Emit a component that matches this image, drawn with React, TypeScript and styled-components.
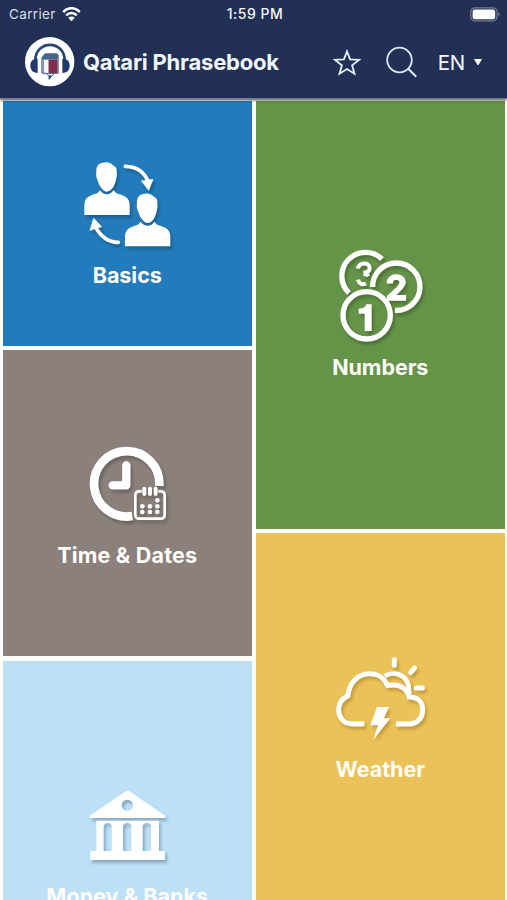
import React from "react";
import styled, { createGlobalStyle } from "styled-components";

const Global = createGlobalStyle`
  * { box-sizing: border-box; }
  body { margin: 0; background: #fff; font-family: Inter, "Liberation Sans", sans-serif; }
`;
const Screen = styled.div`
  width: 507px; height: 900px; overflow: hidden;
  display: flex; flex-direction: column; background: #fdfefb;
`;
const Header = styled.header`
  flex: none; height: 99px; background: #223056; color: #f2f7ff;
  border-bottom: 1px solid #77798a;
  box-shadow: 0 1px 3px rgba(0, 0, 0, 0.75); z-index: 1;
`;
const StatusBar = styled.div`
  height: 27px; padding: 0 6px 0 9px;
  display: grid; grid-template-columns: 1fr auto 1fr; align-items: center;
  font-size: 13.5px; line-height: 28px;
`;
const Carrier = styled.div`
  display: flex; align-items: center; gap: 6px; color: #d9dfeb; letter-spacing: 0.35px;
`;
const Clock = styled.div`font-weight: 500; font-size: 14px; letter-spacing: 0.5px;`;
const Battery = styled.div`display: flex; justify-content: flex-end;`;
const NavBar = styled.div`
  height: 70px; padding: 0 25px 0 25px; display: flex; align-items: center;
`;
const Title = styled.h1`
  margin: 0 auto 0 8px; font-size: 22px; font-weight: 700; letter-spacing: -0.22px; white-space: nowrap;
`;
const StarIcon = styled.svg`margin-right: 25px;`;
const SearchIcon = styled.svg`margin-right: 21px;`;
const Language = styled.div`
  display: flex; align-items: center; gap: 9px; font-size: 20.5px; letter-spacing: -0.2px;
`;
const Columns = styled.main`
  display: grid; grid-template-columns: 248.5px 248.5px; column-gap: 4.5px;
  padding: 2px 0 0 3px;
`;
const Column = styled.div`display: flex; flex-direction: column; gap: 4.5px;`;
const Tile = styled.section<{ $color: string; $height: number }>`
  flex: none; height: ${p => p.$height}px; background: ${p => p.$color};
  display: flex; flex-direction: column; align-items: center; justify-content: center;
`;
const TileIcon = styled.svg<{ $shadow?: string }>`
  width: 120px; height: 104px; overflow: visible; fill: #fff;
  filter: drop-shadow(2px 3px 1.5px ${p => p.$shadow || "rgba(0, 0, 0, 0.22)"});
`;
const TileLabel = styled.h2<{ $spacing?: number }>`
  margin: 0; height: 32px; line-height: 32px; font-size: 21.5px; font-weight: 700;
  color: #fffdfa; white-space: nowrap; letter-spacing: ${p => p.$spacing ?? -0.05}px;
`;
const Numeral = styled.text`
  font-family: Inter, sans-serif; font-weight: 700; text-anchor: middle;
`;

const Logo = () => (
  <svg width="50" height="50" viewBox="0 0 150 150">
    <circle cx="74" cy="74" r="74" fill="#fff" />
    <path d="M31 70C31 8 119 8 119 70" fill="none" stroke="#24457a" strokeWidth="8" />
    <path d="M38 65C22 64 15 75 16 88S25 108 38 108ZM112 65c16-1 23 10 22 23s-9 20-22 20Z" fill="#203c6c" />
    <path d="M49 62 60 49H95L101 55V109H49Z" fill="#45658d" />
    <path d="M51 66H101V111H66L51 106Z" fill="#8794ad" />
    <path d="M57 69H71V110L57 106Z" fill="#f5f5fa" />
    <path d="M71 68H97V109H71Z" fill="#842c50" />
    <path d="M53 110H88L72 127V116L65 112" fill="#fff" stroke="#4d6d97" strokeWidth="3" />
    <path d="M72 115v13l9-12Z" fill="#24457a" />
  </svg>
);

const Person = ({ x, y }: { x: number; y: number }) => (
  <g transform={`translate(${x} ${y})`}>
    <path d="M36 26C36 7 47 1 58 1c8-3 20-1 27 7 9 4 13 10 12 19 1 8 1 13-1 21C92 72 80 88 68 88S44 71 39 52c-4-8-4-14-3-26Z" />
    <path d="M0 158V126C2 103 18 100 39 93L47 84C52 92 60 96 68 96S83 91 88 84L96 93C117 100 134 103 136 126V158Z" />
  </g>
);

const Basics = () => (
  <TileIcon viewBox="-9 15 360 312">
    <Person x={43} y={37} />
    <Person x={165} y={131} />
    <path d="M166 49C201 50 223 64 235 96M145 277C110 276 90 257 76 229" fill="none" stroke="#fff" strokeWidth="11" strokeLinecap="round" />
    <path d="m236 121-22-28 35-5ZM71 205l24 25-35 11Z" stroke="#fff" strokeWidth="2" strokeLinejoin="round" />
  </TileIcon>
);

const Numbers = () => (
  <TileIcon viewBox="1 21 360 312">
    <g fill="none" stroke="#fff" strokeWidth="16">
      <path d="M88 159A71 71 0 0 1 187 57" />
      <path d="M159 141A71 71 0 1 1 226 211" />
      <circle cx="141" cy="226" r="71" />
    </g>
    <path d="M115 86C117 66 150 66 150 84C150 94 142 98 131 98M131 102C139 102 143 104 146 109M115 119C117 130 127 136 139 131" fill="none" stroke="#fff" strokeWidth="12" />
    <Numeral x="230" y="180" fontSize="104" stroke="#fff" strokeWidth="4">2</Numeral>
    <path d="M135 273V221H117V206C131 206 137 202 140 193H156V273Z" />
  </TileIcon>
);

const TimeDates = () => (
  <TileIcon viewBox="51 0 360 312">
    <path d="M247 243A98 98 0 1 1 328 153" fill="none" stroke="#fff" strokeWidth="26" />
    <path d="M229 91V151H188" fill="none" stroke="#fff" strokeWidth="25" strokeLinecap="round" strokeLinejoin="round" />
    <path d="M275 169H268Q256 169 256 181V239Q256 251 268 251H332Q344 251 344 239V181Q344 169 332 169H325" fill="none" stroke="#fff" strokeWidth="8" />
    <path d="M283 161V177M300 161V177M317 161V177" stroke="#fff" strokeWidth="12" strokeLinecap="round" />
    {[[322, 196], [277, 214], [300, 214], [322, 214], [277, 231], [300, 231], [322, 231]].map(([x, y]) => (
      <circle key={`${x}-${y}`} cx={x} cy={y} r="7" />
    ))}
  </TileIcon>
);

const Weather = () => (
  <TileIcon viewBox="0 9 360 312" $shadow="rgba(90, 60, 0, 0.28)">
    <g fill="none" stroke="#fff" strokeWidth="15">
      <path d="M133 234H98C72 234 56 216 56 190C56 169 68 157 84 149C87 111 113 83 149 83C176 83 191 94 203 119C237 111 262 127 267 153C293 153 308 168 308 191C308 217 291 234 267 234H228" />
      <path d="M194 90C221 74 256 85 265 116L268 145" strokeWidth="14" />
      <path d="M223 41V58M272 79 284 66M289 126H307" strokeLinecap="round" />
    </g>
    <path d="M171 183H207L192 217H211L160 281L174 238H151Z" />
  </TileIcon>
);

const Bank = () => (
  <TileIcon viewBox="81 -12 360 312" $shadow="rgba(60, 90, 120, 0.4)">
    <path fillRule="evenodd" d="M150 107 257 34Q263 30 269 34L376 107Q379 114 373 114H153Q147 114 150 107ZM279 76A17 17 0 1 0 245 76A17 17 0 1 0 279 76Z" />
    <path fillRule="evenodd" d="M169 122H357V213H375V240H151V213H169ZM191 213H215V140C215 124 191 124 191 140ZM249 213H274V140C274 124 249 124 249 140ZM308 213H333V140C333 124 308 124 308 140Z" />
  </TileIcon>
);

export default function App() {
  return (
    <>
      <Global />
      <Screen>
        <Header>
          <StatusBar>
            <Carrier>
              Carrier
              <svg width="19" height="15" viewBox="0 0 19 15" fill="none" stroke="#fff" strokeWidth="2.5">
                <path d="M1.2 5.1C6-.1 13-.1 17.8 5.1M4.2 8.3C7.2 5.2 11.8 5.2 14.8 8.3" />
                <path d="m6.2 10.7 3.3 3.5 3.3-3.5C11 9 8 9 6.2 10.7Z" fill="#fff" stroke="none" />
              </svg>
            </Carrier>
            <Clock>1:59 PM</Clock>
            <Battery>
              <svg width="31" height="15" viewBox="0 0 31 15">
                <rect x=".8" y=".8" width="26.2" height="13" rx="4" fill="none" stroke="#777f98" strokeWidth="1.2" />
                <rect x="2.6" y="2.6" width="22.6" height="9.6" rx="2.2" fill="#fff" />
                <path d="M28.3 5v4.5q3-2.2 0-4.5" fill="#777f98" />
              </svg>
            </Battery>
          </StatusBar>
          <NavBar>
            <Logo />
            <Title>Qatari Phrasebook</Title>
            <StarIcon width="28" height="27" viewBox="0 0 28 27" fill="none" stroke="#e4efff" strokeWidth="1.8">
              <path d="M14 2.4 17.1 10.4 26 10.9 19.1 16.3 21.5 24.7 14 20 6.5 24.7 8.9 16.3 2 10.9 10.9 10.4Z" />
            </StarIcon>
            <SearchIcon width="31" height="32" viewBox="0 0 31 32" fill="none" stroke="#dfeaff" strokeWidth="1.8">
              <circle cx="13.5" cy="14" r="12.3" />
              <path d="m22.2 22.7 8 8" strokeWidth="2" />
            </SearchIcon>
            <Language>
              EN
              <svg width="8" height="8" viewBox="0 0 8 8" fill="#fff"><path d="M0 1h8L4.5 7h-1Z" /></svg>
            </Language>
          </NavBar>
        </Header>
        <Columns>
          <Column>
            <Tile $color="#237bbb" $height={244.5}><Basics /><TileLabel>Basics</TileLabel></Tile>
            <Tile $color="#8b807b" $height={306}><TimeDates /><TileLabel $spacing={0.2}>Time &amp; Dates</TileLabel></Tile>
            <Tile $color="#bce0f6" $height={366}><Bank /><TileLabel $spacing={0.05}>Money &amp; Banks</TileLabel></Tile>
          </Column>
          <Column>
            <Tile $color="#659347" $height={427.5}><Numbers /><TileLabel>Numbers</TileLabel></Tile>
            <Tile $color="#ebc258" $height={367}><Weather /><TileLabel>Weather</TileLabel></Tile>
          </Column>
        </Columns>
      </Screen>
    </>
  );
}
